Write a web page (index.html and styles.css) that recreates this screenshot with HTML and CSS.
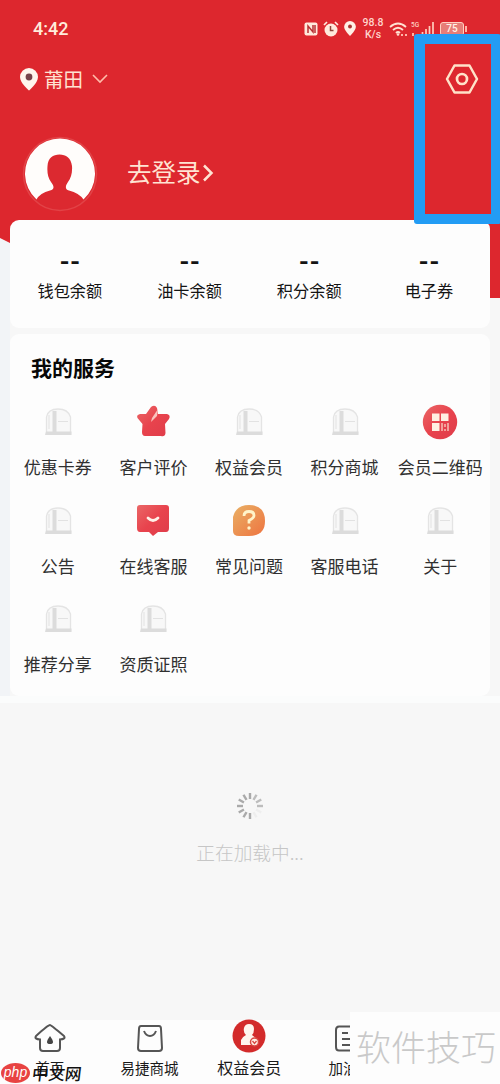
FILE: index.html
```html
<!DOCTYPE html>
<html lang="zh-CN">
<head>
<meta charset="utf-8">
<title>我的</title>
<link rel="stylesheet" href="styles.css">
</head>
<body>
<svg class="defs" aria-hidden="true">
  <defs>
    <linearGradient id="red" x1="0" y1="0" x2="1" y2="1"><stop offset="0" stop-color="#ea6767"/><stop offset=".5" stop-color="#e8434d"/><stop offset="1" stop-color="#df3c4a"/></linearGradient>
    <linearGradient id="orange" x1="0" y1="0" x2="1" y2="1"><stop offset="0" stop-color="#e9b065"/><stop offset="1" stop-color="#ee7440"/></linearGradient>
    <symbol id="blank" viewBox="0 0 32 32">
      <path d="M4.500 28V11Q6 3 16 3Q26 3 28.500 11V28Z" fill="#f8f8f8" stroke="#e4e4e4" stroke-width="1.300"/>
      <path d="M3 29H29.500V25.500H14.500V5H10.500V25.500H4Z" fill="#dcdcdc"/>
      <path d="M16 15.500H26M7 9V23" stroke="#e2e2e2" fill="none"/>
    </symbol>
  </defs>
</svg>
<div class="screen">
  <div class="hero-bg"></div>
  <header class="status">
    <span class="clock">4:42</span>
    <div class="status-icons">
      <svg width="14" height="14" viewBox="0 0 14 14"><rect x=".5" y=".5" width="13" height="13" rx="2" fill="#ffe9dc"/><path d="M4 11V4L9 10V3M11 3V11" fill="none" stroke="#b93034" stroke-width="1.500"/></svg>
      <svg width="16" height="16" viewBox="0 0 16 16"><circle cx="8" cy="9" r="6.500" fill="#ffe9dc"/><path d="M1 4L4 1M12 1L15 4" stroke="#ffe9dc" stroke-width="1.700"/><path d="M7.500 5V9.500H10.500" stroke="#8f453a" stroke-width="1.500" fill="none"/></svg>
      <svg width="12" height="15" viewBox="0 0 18 23"><path d="M9 0a9 9 0 0 0-9 9c0 6 9 14 9 14s9-8 9-14a9 9 0 0 0-9-9z" fill="#fff0e6"/><circle cx="9" cy="8.500" r="3" fill="#a33"/></svg>
      <div class="speed"><span>98.8</span><span>K/s</span></div>
      <svg class="wifi" width="20" height="16" viewBox="0 0 20 16"><path d="M1 6Q9 -1 17 6M4 9Q9 4.500 14 9M7 12Q9 10 11 12" fill="none" stroke="#ffe2d2" stroke-width="1.800"/><circle cx="9" cy="13.500" r="1.300" fill="#ffe2d2"/><path d="M12 14h2M16 14h2" stroke="#ffb5a8" stroke-width="2"/></svg>
      <svg class="signal" width="24" height="16" viewBox="0 0 24 16"><text x="0" y="6" class="net">5G</text><path d="M2 12v3M8 13v3M11.500 11v5M15 8v8M18.500 5v11M22 1v15" stroke="#ffcdbd" stroke-width="1.700"/></svg>
      <div class="battery">75</div>
    </div>
  </header>
  <div class="topbar">
    <svg width="18" height="23" viewBox="0 0 18 23"><path d="M9 0a9 9 0 0 0-9 9c0 6 9 13.500 9 13.500s9-7.500 9-13.500a9 9 0 0 0-9-9z" fill="#fff5ed"/><circle cx="9" cy="9" r="3.400" fill="#77434a"/></svg>
    <span class="city">莆田</span>
    <svg class="chev" width="16" height="10" viewBox="0 0 16 10"><path d="M1 1L8 8L15 1" fill="none" stroke="#ffbcaa" stroke-width="1.600"/></svg>
    <svg class="settings" width="34" height="30" viewBox="0 0 34 30"><path d="M9.500 1.500H24.500L32 15L24.500 28.500H9.500L2 15Z" fill="none" stroke="#ffe2c9" stroke-width="2.500" stroke-linejoin="round"/><circle cx="17" cy="15" r="5" fill="none" stroke="#ffe2c9" stroke-width="2.700"/></svg>
  </div>
  <div class="profile">
    <svg width="76" height="76" viewBox="0 0 76 76"><circle cx="38" cy="38" r="36.500" fill="#dc2930" stroke="#e24347" stroke-width="1.500"/><path d="M14.500 63.500A35 35 0 1 1 61.500 63.500Q57 57 47 54.500C42 53 44 49 46 46C49 42 50.500 37 50 30C49 22 44 18.500 37.500 18.500S26 22 25.500 30C25 37 26 42 29 46C32 50 33 53 28 54.500Q18 57 14.500 63.500Z" fill="#fffdfb"/></svg>
    <span class="login">去登录</span>
    <svg class="go" width="12" height="18" viewBox="0 0 12 18"><path d="M2 1.500L9.500 9L2 16.500" fill="none" stroke="#ffe4d3" stroke-width="2.500"/></svg>
  </div>
  <section class="card stats">
    <div class="stat"><b>--</b><span>钱包余额</span></div>
    <div class="stat"><b>--</b><span>油卡余额</span></div>
    <div class="stat"><b>--</b><span>积分余额</span></div>
    <div class="stat"><b>--</b><span>电子券</span></div>
  </section>
  <section class="card services">
    <h2>我的服务</h2>
    <div class="grid">
      <div class="item"><svg><use href="#blank"/></svg><span>优惠卡券</span></div>
      <div class="item"><svg class="vivid" viewBox="0 0 36 36"><path d="M16 3Q20 0 22 4L23 10L32 10Q36 11 34 15L30 20L30.500 29Q30 33 26 32H10Q7 32 7 28L7.500 20L2.500 14Q1 11 5 10L11 10Z" fill="url(#red)"/><path d="M17 14L23 5L22 12L16 18Z" fill="#f9c3be"/></svg><span>客户评价</span></div>
      <div class="item"><svg><use href="#blank"/></svg><span>权益会员</span></div>
      <div class="item"><svg><use href="#blank"/></svg><span>积分商城</span></div>
      <div class="item"><svg class="vivid" viewBox="0 0 36 36"><circle cx="18" cy="18" r="17.200" fill="url(#red)"/><path d="M10 9.500h7.500v7.500h-7.500zM19 9.500h7.500v7.500h-7.500zM10 19h7.500v8h-7.500z" fill="#fff0e2"/><path d="M20 19v8M23 20v3M26 19v8M22 26h2" stroke="#f6c1b4" stroke-width="1.500"/></svg><span>会员二维码</span></div>
      <div class="item"><svg><use href="#blank"/></svg><span>公告</span></div>
      <div class="item"><svg class="vivid" viewBox="0 0 36 36"><path d="M5 2H31Q34 2 34 5V25Q34 29 31 29H23L18 33L14 29H5Q2 29 2 25V5Q2 2 5 2Z" fill="url(#red)"/><path d="M13 15Q18 20 23 15" fill="none" stroke="#fff1e8" stroke-width="2.800" stroke-linecap="round"/></svg><span>在线客服</span></div>
      <div class="item"><svg class="vivid" viewBox="0 0 36 36"><path d="M2 28V14Q5 2 18 2Q34 2 34 18Q34 33 18 33H8Q2 33 2 28Z" fill="url(#orange)"/><path d="M13 13Q13 8.500 18 8.500T23 12.500Q23 15 18 17.500V20.500" fill="none" stroke="#fff4c9" stroke-width="2.800"/><circle cx="18" cy="25" r="1.700" fill="#fff4c9"/></svg><span>常见问题</span></div>
      <div class="item"><svg><use href="#blank"/></svg><span>客服电话</span></div>
      <div class="item"><svg><use href="#blank"/></svg><span>关于</span></div>
      <div class="item"><svg><use href="#blank"/></svg><span>推荐分享</span></div>
      <div class="item"><svg><use href="#blank"/></svg><span>资质证照</span></div>
    </div>
  </section>
  <div class="strip"></div>
  <main class="loading">
    <svg width="28" height="28" viewBox="-14 -14 28 28" stroke-width="2.400">
      <g stroke="#aaa"><path d="M0-7V-13"/><path d="M0-7V-13" transform="rotate(-30)"/><path d="M0-7V-13" transform="rotate(-60)"/><path d="M0-7V-13" transform="rotate(-90)"/><path d="M0-7V-13" transform="rotate(-120)"/><path d="M0-7V-13" transform="rotate(-150)"/><path d="M0-7V-13" transform="rotate(180)"/></g>
      <g stroke="#bdbdbd"><path d="M0-7V-13" transform="rotate(30)"/><path d="M0-7V-13" transform="rotate(60)"/><path d="M0-7V-13" transform="rotate(90)"/></g>
      <g stroke="#eee"><path d="M0-7V-13" transform="rotate(120)"/><path d="M0-7V-13" transform="rotate(150)"/></g>
    </svg>
    <p>正在加载中...</p>
  </main>
  <nav class="tabs">
    <div class="tab"><svg width="32" height="30" viewBox="0 0 32 30"><path d="M16 2Q17 2 30 13Q32 16 26 16.500V25Q26 28 23 28H9Q6 28 6 25V16.500Q0 16 2 13Q14 2 16 2Z" fill="none" stroke="#555" stroke-width="2"/><path d="M16 13Q10 21 16 21T16 13Z" fill="#444"/></svg><span>首页</span></div>
    <div class="tab"><svg width="26" height="28" viewBox="0 0 26 28"><path d="M4 2H22Q24 2 24 5L25 24Q25 27 22 27H4Q1 27 1 24L2 5Q2 2 4 2Z" fill="none" stroke="#555" stroke-width="2"/><path d="M7 7Q9 12 13 12T19 7" fill="none" stroke="#555" stroke-width="2"/></svg><span>易捷商城</span></div>
    <div class="tab active"><svg width="34" height="34" viewBox="0 0 34 34"><circle cx="17" cy="17" r="16.500" fill="#d32b2b"/><path d="M17 5Q22 5 22 10Q22 14 20 16L25 20V26H9V21Q10 18 14 16Q11 13 12 9Q13 5 17 5Z" fill="#fff4ed"/><circle cx="22.500" cy="23" r="4" fill="#fff1e7" stroke="#d84842" stroke-width="1.500"/><path d="M20.500 22L22.500 24.500L24.500 22" fill="none" stroke="#d84842" stroke-width="1.300"/></svg><span>权益会员</span></div>
    <div class="tab partial"><svg width="27" height="27" viewBox="0 0 27 27"><path d="M26 1.500H4Q1 1.500 1 5V22Q1 25.500 4 25.500H26" fill="none" stroke="#555" stroke-width="2"/><path d="M7 8H13M7 14H17M7 20H17" stroke="#555" stroke-width="2"/></svg><span>加油</span></div>
  </nav>
  <div class="highlight"></div>
  <div class="mark-right">软件技巧</div>
  <div class="mark-left"><i>php</i><b>中文网</b></div>
</div>
</body>
</html>
```
FILE: styles.css
```css
* { box-sizing: border-box; }
body {
  margin: 0;
  font-family: "Noto Sans CJK SC", sans-serif;
  background: #f7f7f8;
  color: #202020;
}
.defs { position: absolute; width: 0; height: 0; }
.screen {
  position: relative;
  width: 500px;
  height: 1084px;
  overflow: hidden;
  display: flex;
  flex-direction: column;
  background: linear-gradient(90deg, #f2f4f7 0 10px, #f7f7f7 10px);
}
.hero-bg {
  position: absolute;
  inset: 0 0 auto;
  height: 298px;
  background: #dd272e;
  clip-path: polygon(0 0, 100% 0, 100% 100%, 97% 100%, 10px 243px, 0 238px);
}
.status, .topbar, .profile, .card, .strip, .loading, .tabs { position: relative; flex: none; }
.status {
  height: 56px;
  padding: 1px 36px 0 33px;
  display: flex;
  justify-content: space-between;
  align-items: center;
}
.clock { font: 500 18px/24px Roboto, sans-serif; color: #ffebdc; }
.status-icons { display: flex; align-items: center; gap: 5px; }
.speed {
  display: flex;
  flex-direction: column;
  align-items: center;
  width: 22px;
  margin-left: 1px;
  font: 500 10.500px/12px Roboto, sans-serif;
  color: #ffd4cc;
}
.signal { margin-left: -3px; }
.net { font: 500 6.500px Roboto, sans-serif; fill: #ffd0c0; }
.battery {
  position: relative;
  width: 24px;
  height: 14px;
  border: 1px solid #ffd1c2;
  border-radius: 3px;
  background: #e77d77;
  color: #fff3e9;
  font: 500 10px/12px Roboto, sans-serif;
  text-align: center;
}
.battery::after {
  content: "";
  position: absolute;
  right: -4px;
  top: 3px;
  width: 2px;
  height: 6px;
  background: #ffb3a5;
}
.topbar { height: 46px; padding: 0 21px 0 20px; display: flex; align-items: center; }
.city { margin: -1px 0 0 6px; font-size: 19.500px; line-height: 28px; color: #ffe3d2; }
.chev { margin-left: 9px; }
.settings { margin-left: auto; }
.profile { height: 118px; padding: 34px 0 0 22px; display: flex; align-items: flex-start; }
.login { margin: 17px 0 0 29px; font-size: 24.500px; line-height: 38px; color: #ffe4d3; }
.go { margin: 28px 0 0 1px; }
.card { margin: 0 10px; background: #fdfdfd; border-radius: 9px; }
.stats { height: 108px; padding-top: 28px; display: grid; grid-template-columns: repeat(4, 119.700px); }
.stat { display: flex; flex-direction: column; align-items: center; color: #141414; }
.stat b { margin-left: 1px; font: 700 26px/22px "Noto Sans CJK SC", sans-serif; letter-spacing: 1px; }
.stat span { margin-top: 8px; font-size: 16.200px; line-height: 24px; }
.services { height: 362px; margin-top: 6px; padding: 19px 2px 0 0; }
.services h2 { margin: 0 0 0 21px; font-size: 21px; line-height: 28px; font-weight: 700; color: #080808; }
.grid { margin-top: 23px; display: grid; grid-template-columns: repeat(5, 1fr); grid-auto-rows: 98.500px; }
.item { display: flex; flex-direction: column; align-items: center; }
.item svg { width: 32px; height: 32px; margin: 2px 0; }
.item .vivid { width: 36px; height: 36px; margin: 0; }
.item span { margin-top: 13px; font-size: 17px; line-height: 28px; color: #303030; white-space: nowrap; }
.strip { height: 7px; background: #fbfcfc; }
.loading { flex: 1; padding-top: 89px; text-align: center; background: #f7f7f7; }
.loading svg { display: block; margin: 0 auto; }
.loading p { margin: 18px 0 0; font-size: 18.700px; line-height: 28px; color: #c6c6c6; font-weight: 300; }
.tabs { height: 64px; display: grid; grid-template-columns: repeat(5, 99.700px); background: #fdfdfd; }
.tab { height: 62px; display: grid; grid-template-rows: 35px 24px; justify-items: center; align-items: center; font-size: 14.500px; color: #191919; }
.tab svg { margin-top: 1px; }
.active { font-size: 16px; }
.active svg { margin-top: -4px; }
.partial span { margin-right: 12px; }
.highlight {
  position: absolute;
  left: 414px;
  top: 34px;
  width: 87px;
  height: 190px;
  border: 10px solid #239cf4;
  border-left-width: 11px;
  border-radius: 3px;
}
.mark-right {
  position: absolute;
  left: 350px;
  top: 1012px;
  width: 150px;
  height: 72px;
  padding-left: 6px;
  background: #fdfdfd;
  color: #c9c9c9;
  font-size: 35px;
  font-weight: 300;
  line-height: 67px;
  white-space: nowrap;
}
.mark-left { position: absolute; left: 1px; top: 1063px; display: flex; align-items: center; gap: 2px; }
.mark-left i { width: 29px; height: 20px; border-radius: 50%; background: #e84342; color: #fff; font: italic 14px/18px "Liberation Sans", sans-serif; text-align: center; }
.mark-left b { font-size: 16.500px; line-height: 20px; font-weight: 500; color: #111; transform: skewX(-7deg); }
```
